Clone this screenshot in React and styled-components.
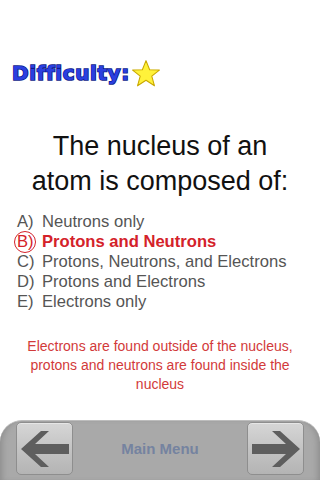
import React from "react";
import styled, { createGlobalStyle } from "styled-components";

const Global = createGlobalStyle`
  html, body { margin: 0; padding: 0; background: #fff; }
  body { width: 320px; height: 480px; overflow: hidden; font-family: "Liberation Sans", Arial, sans-serif; }
`;

const Screen = styled.div`
  width: 320px;
  height: 480px;
  display: flex;
  flex-direction: column;
  background: #fff;
`;

const DifficultyRow = styled.div`
  display: flex;
  align-items: center;
  gap: 1px;
  padding: 58px 0 0 12px;
  height: 30px;
`;

const DifficultyLabel = styled.span`
  font-family: "DejaVu Sans", sans-serif;
  font-weight: 900;
  font-size: 20px;
  letter-spacing: 0.6px;
  color: #2a3fe0;
  -webkit-text-stroke: 1.6px #0d1a8a;
  paint-order: stroke fill;
`;

const Question = styled.h1`
  margin: 41px 0 0;
  font-family: "Liberation Sans", Arial, sans-serif;
  font-weight: 400;
  font-size: 27px;
  line-height: 35px;
  text-align: center;
  color: #111;
`;

const Options = styled.ul`
  list-style: none;
  margin: 13px 0 0;
  padding: 0 0 0 17px;
`;

const Option = styled.li`
  display: flex;
  font-size: 16.6px;
  line-height: 20px;
  color: ${(p) => (p.$correct ? "#d4222a" : "#555")};
  font-weight: ${(p) => (p.$correct ? 700 : 400)};
`;

const Letter = styled.span`
  position: relative;
  width: 25px;
  flex: none;
  font-weight: 400;
`;

const Circle = styled.span`
  position: absolute;
  left: -3px;
  top: -1px;
  width: 22px;
  height: 22px;
  border: 1.5px solid #d4222a;
  border-radius: 50%;
  box-sizing: border-box;
`;

const Explanation = styled.p`
  margin: 25px 20px 0;
  font-size: 14px;
  line-height: 19px;
  text-align: center;
  color: #d23a3a;
`;

const Bar = styled.div`
  margin-top: auto;
  height: 60px;
  background: #a9a9a9;
  border-radius: 22px 22px 0 0;
  border-top: 1px solid #bdbdbd;
  display: flex;
  align-items: center;
  justify-content: space-between;
  padding: 0 16px 4px;
  box-sizing: border-box;
  box-shadow: inset 6px 0 6px -4px #8c8c8c, inset -6px 0 6px -4px #8c8c8c;
`;

const NavButton = styled.div`
  width: 57px;
  height: 53px;
  border-radius: 5px;
  border: 1px solid #8e8e8e;
  background: linear-gradient(#d6d6d6, #c2c2c2 55%, #b4b4b4);
  box-shadow: inset 0 1px 0 #e6e6e6;
  display: flex;
  align-items: center;
  justify-content: center;
  box-sizing: border-box;
`;

const MenuLabel = styled.span`
  font-size: 15px;
  font-weight: 700;
  color: #7583a0;
`;

const Star = () => (
  <svg width="30" height="29" viewBox="0 0 28 27">
    <polygon
      points="14,1.5 17.4,10 26.5,10.3 19.4,16 21.9,25 14,19.8 6.1,25 8.6,16 1.5,10.3 10.6,10"
      fill="#fff23a"
      stroke="#c9a800"
      strokeWidth="1"
      strokeLinejoin="round"
    />
  </svg>
);

const Arrow = ({ dir }) => (
  <svg width="52" height="40" viewBox="0 0 52 40" style={dir === "right" ? { transform: "scaleX(-1)" } : undefined}>
    <polygon points="2,20 22,2 30,2 16,15 50,15 50,25 16,25 30,38 22,38" fill="#5e5e5e" />
  </svg>
);

const options = [
  ["A)", "Neutrons only"],
  ["B)", "Protons and Neutrons", true],
  ["C)", "Protons, Neutrons, and Electrons"],
  ["D)", "Protons and Electrons"],
  ["E)", "Electrons only"],
];

export default function App() {
  return (
    <Screen>
      <Global />
      <DifficultyRow>
        <DifficultyLabel>Difficulty:</DifficultyLabel>
        <Star />
      </DifficultyRow>
      <Question>
        The nucleus of an
        <br />
        atom is composed of:
      </Question>
      <Options>
        {options.map(([l, t, c]) => (
          <Option key={l} $correct={c}>
            <Letter>
              {l}
              {c && <Circle />}
            </Letter>
            <span>{t}</span>
          </Option>
        ))}
      </Options>
      <Explanation>
        Electrons are found outside of the nucleus, protons and neutrons are found inside the nucleus
      </Explanation>
      <Bar>
        <NavButton>
          <Arrow dir="left" />
        </NavButton>
        <MenuLabel>Main Menu</MenuLabel>
        <NavButton>
          <Arrow dir="right" />
        </NavButton>
      </Bar>
    </Screen>
  );
}
